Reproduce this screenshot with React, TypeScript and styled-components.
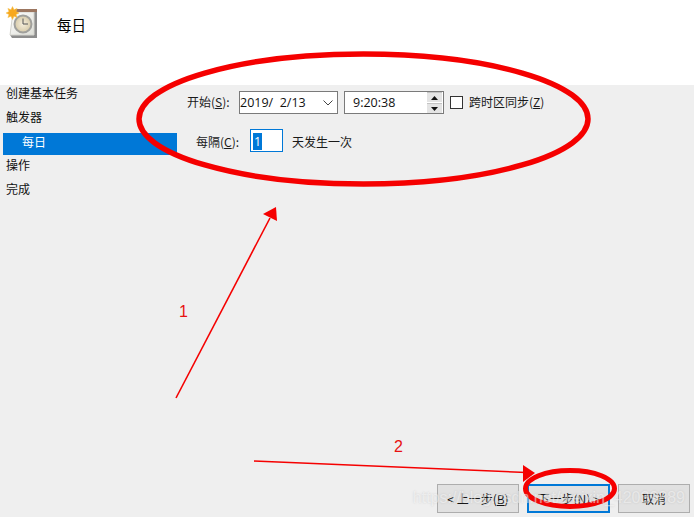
import styled, { createGlobalStyle } from "styled-components";

const GlobalStyle = createGlobalStyle`
  html, body {
    margin: 0;
    padding: 0;
    background: #efefef;
  }
`;

const steps = [
  { label: "创建基本任务" },
  { label: "触发器" },
  { label: "每日", active: true },
  { label: "操作" },
  { label: "完成" },
];

const App = () => {
  return (
    <Page>
      <GlobalStyle />
      <Header>
        <TaskIcon />
        <Title>每日</Title>
      </Header>

      <Body>
        <Sidebar>
          {steps.map((step) => (
            <StepRow key={step.label} $active={step.active}>
              {step.label}
            </StepRow>
          ))}
        </Sidebar>

        <Form>
          <StartRow>
            <StartLabel>
              开始(<u>S</u>):
            </StartLabel>
            <DateField>
              <FieldText>{"2019/  2/13"}</FieldText>
              <svg width="10" height="6" viewBox="0 0 10 6">
                <path d="M0.5 0.5 L5 5 L9.5 0.5" fill="none" stroke="#444" strokeWidth="1" />
              </svg>
            </DateField>
            <TimeField>
              <TimeText>9:20:38</TimeText>
              <Spinner>
                <SpinButton>
                  <svg width="7" height="4" viewBox="0 0 7 4">
                    <path d="M3.5 0 L7 4 L0 4 Z" fill="#111" />
                  </svg>
                </SpinButton>
                <SpinButton>
                  <svg width="7" height="4" viewBox="0 0 7 4">
                    <path d="M0 0 L7 0 L3.5 4 Z" fill="#111" />
                  </svg>
                </SpinButton>
              </Spinner>
            </TimeField>
            <CheckBox />
            <CheckLabel>
              跨时区同步(<u>Z</u>)
            </CheckLabel>
          </StartRow>

          <RepeatRow>
            <RepeatLabel>
              每隔(<u>C</u>):
            </RepeatLabel>
            <RepeatInput>
              <Selected>1</Selected>
            </RepeatInput>
            <RepeatHint>天发生一次</RepeatHint>
          </RepeatRow>
        </Form>
      </Body>

      <Footer>
        <WizardButton>
          &lt; 上一步(<u>B</u>)
        </WizardButton>
        <WizardButton $primary>
          下一步(<u>N</u>) &gt;
        </WizardButton>
        <WizardButton $narrow>取消</WizardButton>
      </Footer>

      <Annotations />
      <Watermark>https://blog.csdn.net/weixin_42039889</Watermark>
    </Page>
  );
};

export default App;

const TaskIcon = () => (
  <IconWrap>
    <svg width="40" height="40" viewBox="0 0 40 40">
      <defs>
        <linearGradient id="paper" x1="0" y1="0" x2="1" y2="1">
          <stop offset="0" stopColor="#ffffff" />
          <stop offset="1" stopColor="#dedfd8" />
        </linearGradient>
        <radialGradient id="face" cx="0.5" cy="0.5" r="0.55">
          <stop offset="0" stopColor="#f6efdc" />
          <stop offset="1" stopColor="#d3c6a4" />
        </radialGradient>
      </defs>
      <path d="M14 10 H37 V38 H12 L10 35 Z" fill="#8d8d8d" />
      <path d="M13 12 H34 V35 H10 Z" fill="url(#paper)" stroke="#d4d4ce" strokeWidth="1" />
      <rect x="15" y="9" width="22" height="3" fill="#9c7660" />
      <circle cx="23" cy="24" r="8.5" fill="url(#face)" stroke="#a0a09c" strokeWidth="2" />
      <path d="M23 18.5 V24 H28" fill="none" stroke="#555" strokeWidth="1" />
      <path
        d="M12.5 6.5 L14 9.8 L17.1 8.4 L16 11.5 L19 13 L16 14.5 L17.1 17.6 L14 16.2 L12.5 19.5 L11 16.2 L7.9 17.6 L9 14.5 L6 13 L9 11.5 L7.9 8.4 L11 9.8 Z"
        fill="#f8a81e"
        stroke="#f4c14a"
        strokeWidth="0.5"
      />
    </svg>
  </IconWrap>
);

const Annotations = () => (
  <Overlay viewBox="0 0 694 517" width="694" height="517">
    <g fill="none" stroke="#f50000">
      <ellipse cx="363.5" cy="119" rx="224.5" ry="65" strokeWidth="5.5" />
      <ellipse cx="570" cy="488.5" rx="44.5" ry="18" strokeWidth="5" />
      <path d="M176 398 L270 218" strokeWidth="1.6" />
      <path d="M254 461 L526 472.5" strokeWidth="1.6" />
    </g>
    <g fill="#f50000">
      <path d="M276 207 L277 221 L263 214 Z" />
      <path d="M535 473 L523 465 L523 482 Z" />
    </g>
    <AnnotationText x="179" y="317">1</AnnotationText>
    <AnnotationText x="394" y="452">2</AnnotationText>
  </Overlay>
);

const cjk = `"Noto Sans CJK SC", "Noto Sans", sans-serif`;

const Page = styled.div`
  position: relative;
  width: 694px;
  height: 517px;
  overflow: hidden;
  display: flex;
  flex-direction: column;
  background: #efefef;
  font-family: ${cjk};
  font-size: 12px;
  color: #1a1a1a;
`;

const Header = styled.header`
  height: 85px;
  flex: none;
  background: #ffffff;
  display: flex;
  align-items: flex-start;
`;

const IconWrap = styled.div`
  width: 40px;
  height: 40px;
  flex: none;
`;

const Title = styled.h1`
  margin: 13px 0 0 17px;
  font-size: 14.5px;
  line-height: 24px;
  font-weight: 400;
  color: #000;
`;

const Body = styled.main`
  flex: 1;
  display: flex;
  min-height: 0;
`;

const Sidebar = styled.nav`
  width: 174px;
  margin-left: 3px;
  flex: none;
  display: flex;
  flex-direction: column;
`;

const StepRow = styled.div<{ $active?: boolean }>`
  box-sizing: border-box;
  height: ${(p) => (p.$active ? "22px" : "24px")};
  margin-bottom: ${(p) => (p.$active ? "2px" : "0")};
  padding-top: ${(p) => (p.$active ? "1px" : "0")};
  padding-left: ${(p) => (p.$active ? "19px" : "3px")};
  line-height: 16px;
  color: ${(p) => (p.$active ? "#fff" : "#111")};
  background: ${(p) => (p.$active ? "#0078d7" : "transparent")};
`;

const Form = styled.section`
  flex: 1;
  display: flex;
  flex-direction: column;
  padding-top: 6px;
`;

const StartRow = styled.div`
  display: flex;
  align-items: center;
  height: 23px;
`;

const StartLabel = styled.label`
  width: 52px;
  margin-left: 10px;
  padding-bottom: 2px;
  flex: none;
  white-space: nowrap;
`;

const FieldBox = styled.div`
  box-sizing: border-box;
  height: 23px;
  flex: none;
  display: flex;
  align-items: center;
  justify-content: space-between;
  padding: 0 1px;
  background: #fff;
  border: 1px solid #7a7a7a;
`;

const DateField = styled(FieldBox)`
  width: 99px;
  margin-right: 6px;
  padding: 0 4px 0 0;
`;

const TimeField = styled(FieldBox)`
  width: 100px;
  margin-right: 6px;
`;

const FieldText = styled.span`
  font-family: "Open Sans", "Noto Sans", sans-serif;
  font-size: 12.5px;
  white-space: pre;
  color: #111;
`;

const TimeText = styled(FieldText)`
  margin-left: 7px;
`;

const Spinner = styled.div`
  display: flex;
  flex-direction: column;
  gap: 1px;
`;

const SpinButton = styled.div`
  width: 15px;
  height: 9px;
  display: flex;
  align-items: center;
  justify-content: center;
  background: #e4e4e4;
  border-top: 1px solid #c4c4c4;
`;

const CheckBox = styled.span`
  box-sizing: border-box;
  width: 13px;
  height: 13px;
  margin-right: 6px;
  flex: none;
  background: #fff;
  border: 1px solid #333;
`;

const CheckLabel = styled.span`
  padding-bottom: 2px;
  white-space: nowrap;
`;

const RepeatRow = styled.div`
  display: flex;
  align-items: center;
  height: 23px;
  margin-top: 15px;
`;

const RepeatLabel = styled.label`
  width: 54px;
  margin-left: 19px;
  padding-top: 2px;
  flex: none;
  white-space: nowrap;
`;

const RepeatInput = styled.div`
  box-sizing: border-box;
  width: 33px;
  height: 23px;
  flex: none;
  padding: 2px;
  background: #fff;
  border: 1px solid #0078d7;
`;

const Selected = styled.span`
  display: inline-block;
  height: 17px;
  line-height: 17px;
  padding: 0 1px;
  font-family: "Open Sans", "Noto Sans", sans-serif;
  font-size: 12.5px;
  color: #fff;
  background: #0078d7;
`;

const RepeatHint = styled.span`
  margin-left: 9px;
  padding-top: 2px;
`;

const Footer = styled.footer`
  flex: none;
  display: flex;
  justify-content: flex-end;
  gap: 8px;
  padding: 0 4px 4px 0;
`;

const WizardButton = styled.button<{ $primary?: boolean; $narrow?: boolean }>`
  box-sizing: border-box;
  width: ${(p) => (p.$narrow ? "72px" : p.$primary ? "83px" : "82px")};
  height: 29px;
  padding: 0;
  font: inherit;
  color: #111;
  background: #e1e1e1;
  border: ${(p) => (p.$primary ? "2px solid #0078d7" : "1px solid #adadad")};
`;

const Overlay = styled.svg`
  position: absolute;
  left: 0;
  top: 0;
  pointer-events: none;
`;

const AnnotationText = styled.text`
  font-family: "Liberation Sans", sans-serif;
  font-size: 16px;
  fill: #e81010;
`;

const Watermark = styled.div`
  position: absolute;
  right: 9px;
  bottom: 10px;
  font-family: "Liberation Sans", sans-serif;
  font-size: 16px;
  line-height: 18px;
  white-space: nowrap;
  color: rgba(255, 255, 255, 0.5);
  text-shadow: 0 0 2px rgba(150, 150, 150, 0.35);
`;
